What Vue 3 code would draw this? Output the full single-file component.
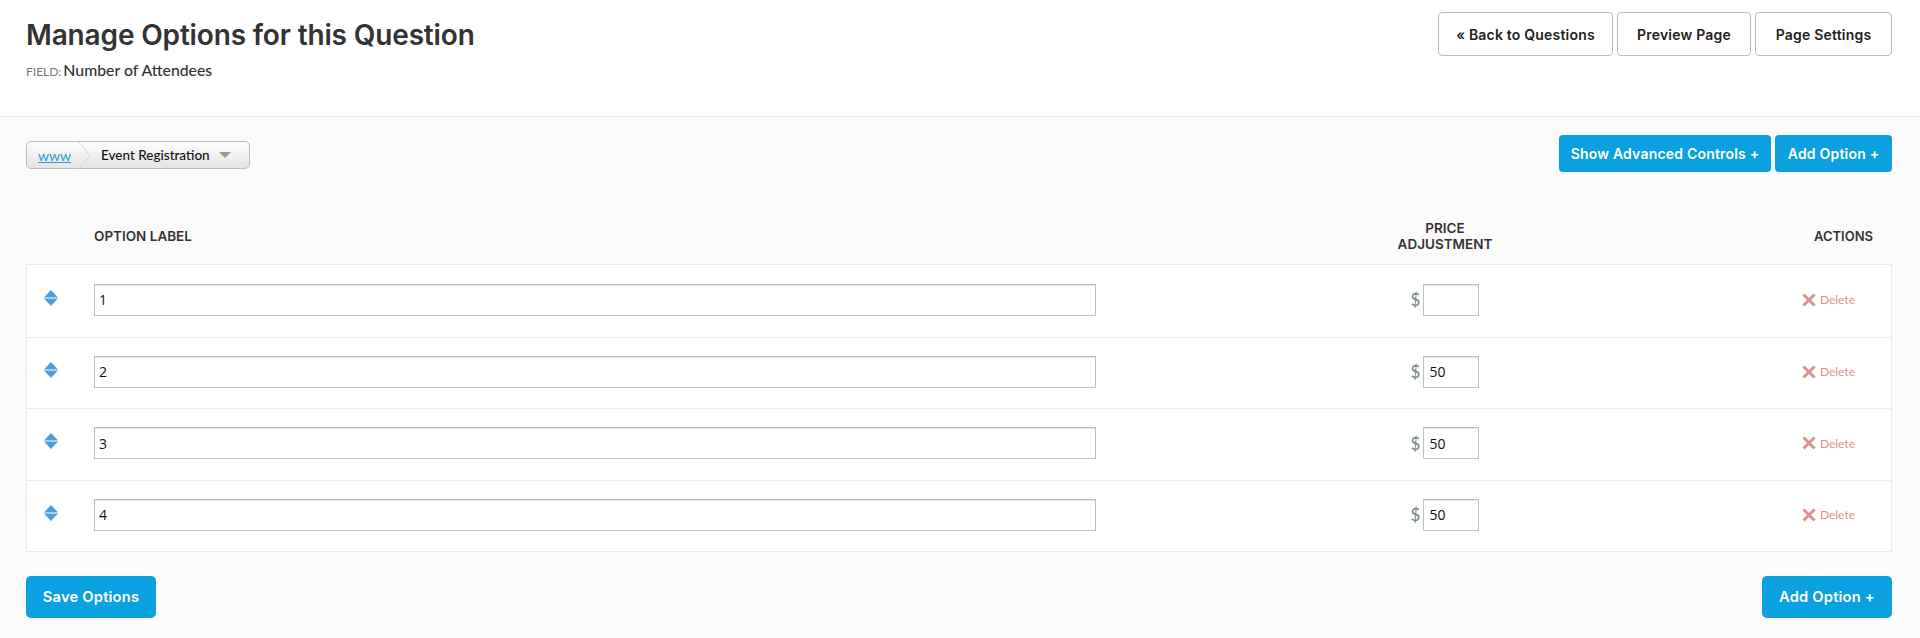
<template>
  <div class="page">
    <header class="page-head">
      <div>
        <h1>Manage Options for this Question</h1>
        <p class="field"><span class="field-key">FIELD:</span> Number of Attendees</p>
      </div>
      <div class="head-actions">
        <a class="btn-outline back">« Back to Questions</a>
        <a class="btn-outline preview">Preview Page</a>
        <a class="btn-outline settings">Page Settings</a>
      </div>
    </header>

    <main class="content">
      <div class="toolbar">
        <div class="crumbs">
          <a class="crumb-link">www</a>
          <svg class="crumb-sep" width="14" height="27" viewBox="0 0 14 27">
            <path d="M1 0 L12 13.5 L1 27" fill="none" stroke="#d6d6d6" stroke-width="1" />
          </svg>
          <span class="crumb-current">Event Registration</span>
          <span class="crumb-caret"></span>
        </div>
        <div class="toolbar-actions">
          <a class="btn-blue advanced">Show Advanced Controls +</a>
          <a class="btn-blue add">Add Option +</a>
        </div>
      </div>

      <div class="table-head">
        <div></div>
        <div>OPTION LABEL</div>
        <div class="th-price">PRICE<br />ADJUSTMENT</div>
        <div class="th-actions">ACTIONS</div>
      </div>

      <div class="rows">
        <div v-for="option in options" :key="option.label" class="row">
          <div class="drag">
            <svg width="14" height="16" viewBox="0 0 14 16">
              <path d="M7 0 L14 7.5 H0 Z" fill="#4d9fd9" />
              <path d="M0 8.5 H14 L7 16 Z" fill="#4d9fd9" />
            </svg>
          </div>
          <div>
            <input class="label-input" type="text" :value="option.label" />
          </div>
          <div class="price">
            <span class="dollar">$</span>
            <input class="price-input" type="text" :value="option.price" />
          </div>
          <div class="delete">
            <svg width="14" height="14" viewBox="0 0 14 14">
              <path d="M1.5 1.5 L12.5 12.5 M12.5 1.5 L1.5 12.5" stroke="#e08f8f" stroke-width="3" fill="none" />
            </svg>
            <span>Delete</span>
          </div>
        </div>
      </div>

      <div class="foot">
        <a class="btn-blue btn-big save">Save Options</a>
        <a class="btn-blue btn-big add-bottom">Add Option +</a>
      </div>
    </main>
  </div>
</template>

<script setup>
const options = [
  { label: "1", price: "" },
  { label: "2", price: "50" },
  { label: "3", price: "50" },
  { label: "4", price: "50" },
];
</script>

<style>
html,
body {
  margin: 0;
  background: #fbfbfb;
}
</style>

<style scoped>
.page {
  height: 638px;
  overflow: hidden;
  font-family: "Lato", "Open Sans", sans-serif;
  color: #222;
  background: #fbfbfb;
}

.page-head {
  height: 117px;
  box-sizing: border-box;
  display: flex;
  justify-content: space-between;
  padding: 12px 28px 0 26px;
  background: #fff;
  border-bottom: 1px solid #ebebeb;
}

h1 {
  margin: 5px 0 0;
  font-family: "Inter", sans-serif;
  font-size: 28px;
  line-height: 36px;
  font-weight: 600;
  letter-spacing: -0.15px;
  color: #333;
}

.field {
  margin: 7px 0 0;
  font-size: 15.8px;
  line-height: 20px;
  font-weight: 500;
  color: #333;
}

.field-key {
  margin-right: -2px;
  font-size: 12px;
  font-weight: 400;
  color: #777;
}

.head-actions {
  display: flex;
  gap: 4px;
}

.btn-outline {
  height: 44px;
  box-sizing: border-box;
  display: flex;
  align-items: center;
  justify-content: center;
  border: 1px solid #bbb;
  border-radius: 4px;
  background: #fff;
  font-family: "Inter", sans-serif;
  font-size: 14px;
  letter-spacing: 0.2px;
  font-weight: 600;
  color: #222;
}

.back {
  width: 175px;
}

.preview {
  width: 134px;
}

.settings {
  width: 137px;
}

.content {
  padding: 0 28px 0 26px;
}

.toolbar {
  display: flex;
  justify-content: space-between;
  align-items: flex-start;
  padding-top: 18px;
}

.crumbs {
  margin-top: 6px;
  width: 224px;
  height: 28px;
  box-sizing: border-box;
  display: flex;
  align-items: center;
  border: 1px solid #bdbdbd;
  border-radius: 5px;
  background: linear-gradient(#fdfdfd, #e4e4e4);
  font-size: 14px;
}

.crumb-link {
  margin-left: 11px;
  color: #2b9fd8;
  text-decoration: underline;
}

.crumb-sep {
  margin-left: 7px;
}

.crumb-current {
  margin-left: 9px;
  font-size: 13.5px;
  font-weight: 500;
  color: #111;
}

.crumb-caret {
  margin-left: 9px;
  border-left: 6px solid transparent;
  border-right: 6px solid transparent;
  border-top: 6px solid #999;
}

.toolbar-actions {
  display: flex;
  gap: 4px;
}

.btn-blue {
  height: 37px;
  box-sizing: border-box;
  display: flex;
  align-items: center;
  justify-content: center;
  border-radius: 4px;
  background: #0ba0df;
  font-family: "Inter", sans-serif;
  font-size: 14px;
  letter-spacing: 0.2px;
  font-weight: 600;
  color: #fff;
}

.advanced {
  width: 212px;
}

.add {
  width: 117px;
}

.table-head,
.row {
  display: grid;
  grid-template-columns: 67px 1300px 102px 1fr;
  align-items: center;
}

.table-head {
  height: 92px;
  box-sizing: border-box;
  padding: 36px 1px 0;
  font-family: "Inter", sans-serif;
  font-size: 13.5px;
  line-height: 16px;
  font-weight: 600;
  color: #333;
}

.th-price {
  text-align: center;
}

.th-actions {
  text-align: right;
  padding-right: 18px;
  font-size: 13px;
}

.rows {
  background: #fff;
  border: 1px solid #ebebeb;
}

.row {
  height: 71.5px;
  box-sizing: border-box;
  padding-bottom: 2px;
}

.row + .row {
  border-top: 1px solid #e8eef0;
}

.drag {
  display: flex;
  justify-content: center;
  padding-right: 20px;
  margin-top: -4px;
}

.drag svg {
  display: block;
}

input {
  box-sizing: border-box;
  height: 32px;
  padding: 0 5px;
  border: 1px solid #bfbfbf;
  box-shadow: inset 0 1px 1px #e4e4e4;
  background: #fff;
  font-family: "Open Sans", sans-serif;
  font-size: 14px;
  color: #111;
}

.label-input {
  display: block;
  width: 1002px;
  padding-left: 4px;
}

.price {
  display: flex;
  align-items: center;
  justify-content: center;
  gap: 3px;
}

.dollar {
  font-size: 17px;
  color: #6d818a;
}

.price-input {
  width: 56px;
}

.delete {
  display: flex;
  align-items: center;
  justify-content: flex-end;
  gap: 4px;
  padding-right: 36px;
  font-size: 12px;
  color: #e08f8f;
}

.foot {
  display: flex;
  justify-content: space-between;
  padding-top: 24px;
}

.btn-big {
  height: 42px;
  width: 130px;
  border-radius: 5px;
  font-size: 14.7px;
}
</style>
